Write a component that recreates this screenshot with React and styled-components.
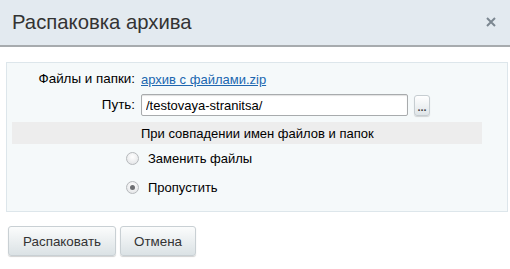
import React from "react";
import styled, { createGlobalStyle } from "styled-components";

const Global = createGlobalStyle`
  html, body { margin: 0; padding: 0; background: #fff; }
  body { font-family: "Liberation Sans", Arial, sans-serif; font-size: 13px; color: #000; }
  * { box-sizing: border-box; }
`;

const Dialog = styled.div`
  width: 510px;
  height: 269px;
  background: #fff;
`;

const Header = styled.div`
  height: 47px;
  background: #e3eaf0;
  border-bottom: 2px solid #a7abae;
  display: flex;
  align-items: center;
  justify-content: space-between;
  padding: 0 13px 1px 12px;
`;

const Title = styled.div`
  font-size: 20.3px;
  color: #333;
`;

const Close = styled.div`
  width: 12px;
  height: 12px;
  display: flex;
  align-items: center;
  justify-content: center;
`;

const Body = styled.div`
  padding: 15px 2px 0 6px;
`;

const Panel = styled.div`
  background: #f5f9fa;
  border: 1px solid #dde6eb;
  padding: 4px 25px 6px 5px;
  height: 150px;
`;

const Grid = styled.div`
  display: grid;
  grid-template-columns: 129px 1fr;
  align-items: center;
`;

const Label = styled.div`
  text-align: right;
  padding-right: 6px;
  color: #000;
  font-size: 13.4px;
  height: ${(p) => p.h}px;
  line-height: ${(p) => p.h}px;
`;

const Value = styled.div`
  display: flex;
  align-items: center;
  height: ${(p) => p.h}px;
`;

const Link = styled.a`
  color: #2067b0;
  text-decoration: underline;
  cursor: pointer;
`;

const Input = styled.input`
  width: 267px;
  height: 22px;
  border: 1px solid #a8abad;
  border-radius: 2px;
  padding: 0 4px;
  font-family: "Liberation Sans", Arial, sans-serif;
  font-size: 13px;
  color: #000;
  background: #fff;
  box-shadow: inset 0 1px 1px rgba(0,0,0,0.12);
  outline: none;
`;

const DotsButton = styled.button`
  margin-left: 6px;
  width: 16px;
  height: 21px;
  padding: 0;
  border: 1px solid #c6cdd1;
  border-radius: 3px;
  background: linear-gradient(#fff, #dfe5e8);
  box-shadow: 0 1px 1px rgba(0,0,0,0.15);
  font-family: "Liberation Sans", Arial, sans-serif;
  font-size: 11px;
  line-height: 22px;
  color: #444;
  font-weight: bold;
`;

const Band = styled.div`
  grid-column: 1 / 3;
  height: 22px;
  margin-top: 3px;
  background: #ededed;
  display: grid;
  grid-template-columns: 129px 1fr;
  align-items: center;
`;

const BandText = styled.div`
  grid-column: 2;
  color: #000;
`;

const RadioRow = styled.label`
  grid-column: 1 / 3;
  display: grid;
  grid-template-columns: 129px 1fr;
  align-items: center;
  height: 29px;
`;

const RadioCell = styled.div`
  display: flex;
  justify-content: flex-end;
  padding-right: 2px;
`;

const RadioCircle = styled.span`
  width: 13px;
  height: 13px;
  border-radius: 50%;
  border: 1px solid #b6b9bc;
  background: radial-gradient(circle at 50% 35%, #ffffff, #dfe1e3);
  display: flex;
  align-items: center;
  justify-content: center;
  &::after {
    content: "";
    display: ${(p) => (p.checked ? "block" : "none")};
    width: 5px;
    height: 5px;
    border-radius: 50%;
    background: #6d6f72;
  }
`;

const RadioText = styled.span`
  padding-left: 7px;
  color: #000;
`;

const Footer = styled.div`
  display: flex;
  gap: 4px;
  padding: 14px 0 0 8px;
`;

const Button = styled.button`
  height: 30px;
  padding: 0 ${(p) => p.px}px;
  border: 1px solid #c9d0d4;
  border-radius: 3px;
  background: linear-gradient(#fbfcfc, #dbe2e5);
  box-shadow: 0 1px 1px rgba(0,0,0,0.18);
  font-family: "Liberation Sans", Arial, sans-serif;
  font-size: 13.4px;
  color: #333;
  cursor: pointer;
`;

export default function App() {
  return (
    <>
      <Global />
      <Dialog>
        <Header>
          <Title>Распаковка архива</Title>
          <Close>
            <svg width="10" height="10" viewBox="0 0 10 10">
              <path d="M1 1 L9 9 M9 1 L1 9" stroke="#7c8791" strokeWidth="2" />
            </svg>
          </Close>
        </Header>
        <Body>
          <Panel>
            <Grid>
              <Label h={24}>Файлы и папки:</Label>
              <Value h={24}>
                <Link>архив с файлами.zip</Link>
              </Value>
              <Label h={28}>Путь:</Label>
              <Value h={28}>
                <Input defaultValue="/testovaya-stranitsa/" />
                <DotsButton>...</DotsButton>
              </Value>
              <Band>
                <BandText>При совпадении имен файлов и папок</BandText>
              </Band>
              <RadioRow>
                <RadioCell>
                  <RadioCircle />
                </RadioCell>
                <RadioText>Заменить файлы</RadioText>
              </RadioRow>
              <RadioRow>
                <RadioCell>
                  <RadioCircle checked />
                </RadioCell>
                <RadioText>Пропустить</RadioText>
              </RadioRow>
            </Grid>
          </Panel>
        </Body>
        <Footer>
          <Button px={14}>Распаковать</Button>
          <Button px={13}>Отмена</Button>
        </Footer>
      </Dialog>
    </>
  );
}
